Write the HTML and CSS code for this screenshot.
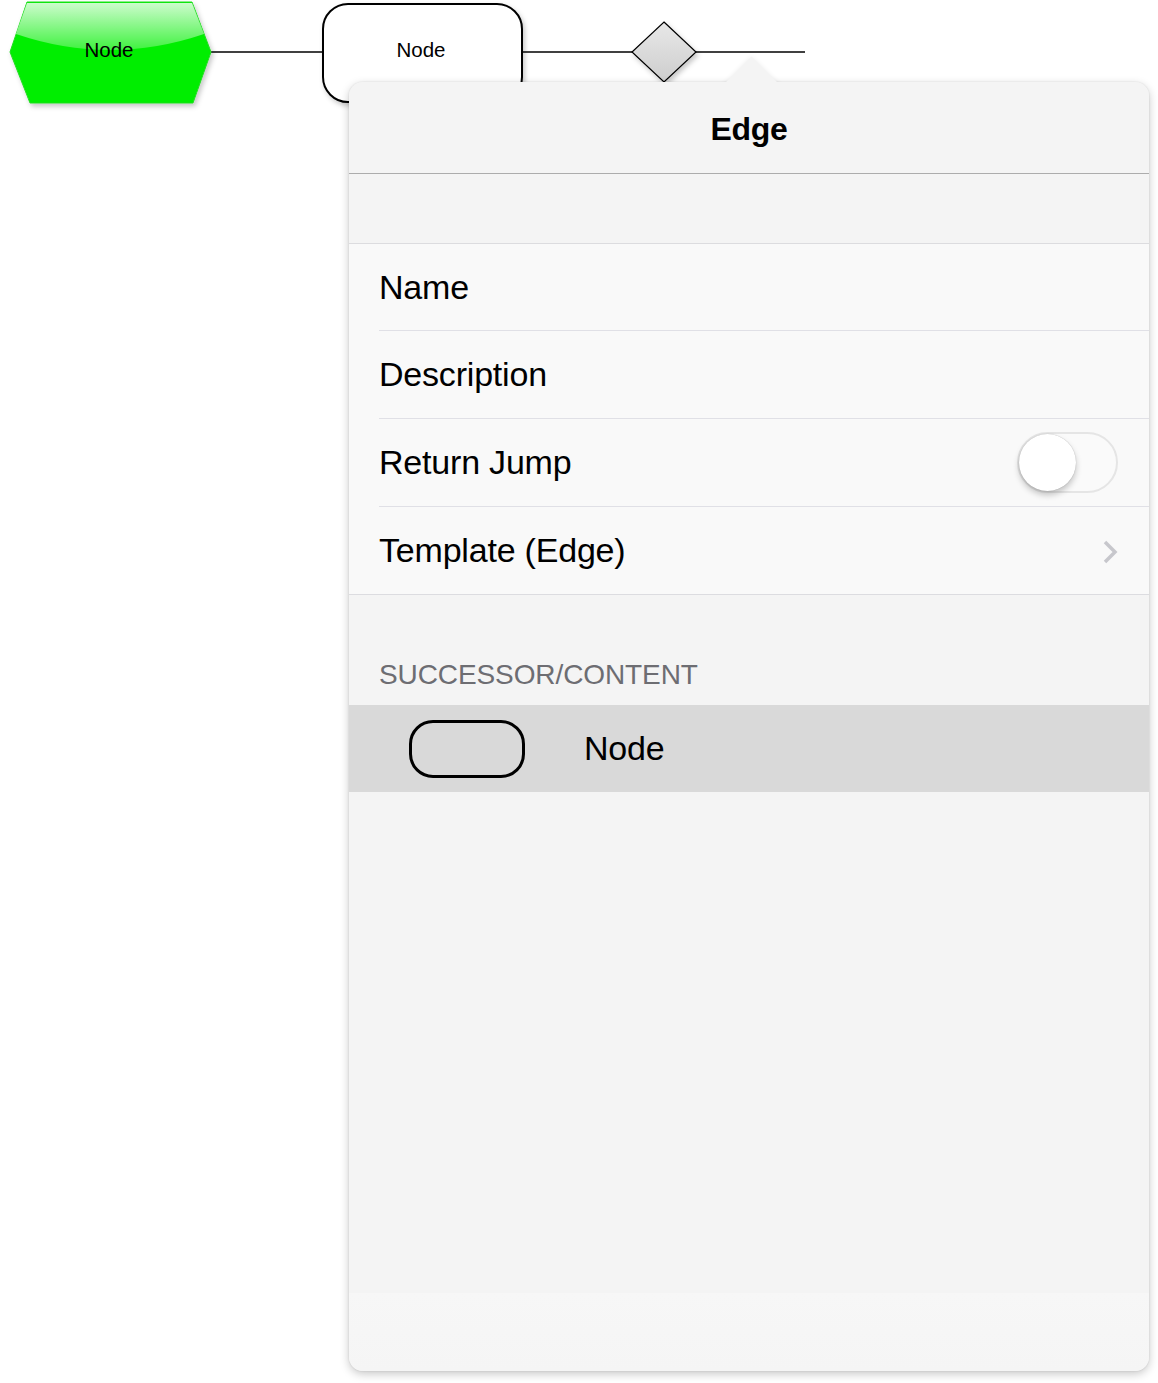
FILE: index.html
```html
<!DOCTYPE html>
<html lang="en">
<head>
    <meta charset="UTF-8">
    <title>Edge</title>
    <link rel="stylesheet" href="styles.css">
</head>
<body>
    <div id="canvas">
        <svg class="diagram" width="820" height="120" viewBox="0 0 820 120">
            <defs>
                <filter id="drop" x="-20%" y="-20%" width="140%" height="150%">
                    <feDropShadow dx="2" dy="3" stdDeviation="2.5" flood-color="#000" flood-opacity="0.22"/>
                </filter>
                <linearGradient id="gloss" x1="0" y1="0" x2="0" y2="1">
                    <stop offset="0" stop-color="#ffffff" stop-opacity="0.8"/>
                    <stop offset="1" stop-color="#ffffff" stop-opacity="0.25"/>
                </linearGradient>
                <linearGradient id="grey" x1="0" y1="0" x2="0" y2="1">
                    <stop offset="0" stop-color="#e8e8e8"/>
                    <stop offset="1" stop-color="#cdcdcd"/>
                </linearGradient>
            </defs>
            <line x1="211" y1="52" x2="323" y2="52" stroke="#000" stroke-width="1.5"/>
            <line x1="522" y1="52" x2="805" y2="52" stroke="#000" stroke-width="1.5"/>

            <g filter="url(#drop)">
                <polygon points="27,2 192,2 211,52 193,103 30,103 10,52" fill="#00ee00" stroke="#22dd22" stroke-width="1"/>
            </g>
            <path d="M 16,34 Q 110,66 204,34 L 192,3 L 27,3 Z" fill="url(#gloss)"/>
            <text x="109" y="57" class="node-label">Node</text>

            <rect x="323" y="4" width="199" height="98" rx="25" fill="#fff" stroke="#000" stroke-width="2" filter="url(#drop)"/>
            <text x="421" y="57" class="node-label">Node</text>

            <polygon points="664,22 696,52 664,82 632,52" fill="url(#grey)" stroke="#000" stroke-width="1.2" filter="url(#drop)"/>
        </svg>
    </div>

    <div class="popover">
        <div class="popover-arrow"></div>
        <div class="popover-header">Edge</div>
        <div class="spacer"></div>

        <div class="group">
            <div class="cell"><div class="cell-inner">Name</div></div>
            <div class="cell"><div class="cell-inner">Description</div></div>
            <div class="cell">
                <div class="cell-inner">
                    <span>Return Jump</span>
                    <span class="switch"><span class="knob"></span></span>
                </div>
            </div>
            <div class="cell">
                <div class="cell-inner last">
                    <span>Template (Edge)</span>
                    <svg class="chevron" width="16" height="24" viewBox="0 0 16 24">
                        <polyline points="3,2 13,12 3,22" fill="none" stroke="#c7c7cc" stroke-width="3.5"/>
                    </svg>
                </div>
            </div>
        </div>

        <div class="section-header">SUCCESSOR/CONTENT</div>
        <div class="cell selected">
            <span class="node-icon"></span>
            <span class="node-name">Node</span>
        </div>
        <div class="popover-fill"></div>
    </div>
</body>
</html>
```
FILE: styles.css
```css
body {
    margin: 0;
    background: #fff;
    font-family: "Liberation Sans", Arial, sans-serif;
    width: 1158px;
    height: 1383px;
    position: relative;
    overflow: hidden;
}
#canvas {
    position: absolute;
    left: 0;
    top: 0;
}
.diagram {
    display: block;
}
.node-label {
    font-family: "Liberation Sans", Arial, sans-serif;
    font-size: 20.5px;
    text-anchor: middle;
    fill: #000;
}
.popover {
    position: absolute;
    left: 349px;
    top: 82px;
    width: 800px;
    height: 1289px;
    background: #f4f4f4;
    border-radius: 14px;
    box-shadow: 0 3px 10px rgba(0, 0, 0, 0.22), 0 0 2px rgba(0, 0, 0, 0.12);
    display: flex;
    flex-direction: column;
}
.popover-arrow {
    position: absolute;
    left: 382px;
    top: -17px;
    width: 41px;
    height: 41px;
    background: #f4f4f4;
    transform: rotate(45deg);
    box-shadow: 0 0 5px rgba(0, 0, 0, 0.07);
}
.popover-header {
    position: relative;
    z-index: 1;
    height: 92px;
    box-sizing: border-box;
    border-bottom: 1px solid #acacac;
    border-radius: 14px 14px 0 0;
    background: #f4f4f4;
    display: flex;
    align-items: center;
    justify-content: center;
    font-size: 32px;
    font-weight: bold;
    letter-spacing: -0.3px;
    color: #000;
    padding-top: 3px;
}
.spacer {
    height: 70px;
    box-sizing: border-box;
    border-bottom: 1px solid #dcdcdf;
}
.group {
    background: #f9f9f9;
    border-bottom: 1px solid #dcdce0;
}
.cell {
    padding-left: 30px;
    font-size: 34px;
    letter-spacing: -0.2px;
    color: #000;
}
.cell-inner {
    height: 88px;
    box-sizing: border-box;
    border-bottom: 1px solid #e0e0e6;
    padding-right: 31px;
    display: flex;
    align-items: center;
    justify-content: space-between;
}
.cell:first-child .cell-inner {
    height: 87px;
}
.cell-inner.last {
    border-bottom: none;
    height: 87px;
}
.switch {
    position: relative;
    width: 101px;
    height: 61px;
    box-sizing: border-box;
    border: 2px solid #e5e5e5;
    border-radius: 31px;
    background: #fafafa;
}
.knob {
    position: absolute;
    left: 0;
    top: 0;
    width: 57px;
    height: 57px;
    border-radius: 50%;
    background: #fff;
    box-shadow: 0 4px 6px rgba(0, 0, 0, 0.22), 0 0 1px rgba(0, 0, 0, 0.3);
}
.chevron {
    display: block;
    margin-top: 2px;
}
.section-header {
    height: 110px;
    box-sizing: border-box;
    padding: 0 0 14px 30px;
    display: flex;
    align-items: flex-end;
    font-size: 28px;
    letter-spacing: -0.1px;
    color: #6d6d72;
}
.cell.selected {
    height: 87px;
    background: #d9d9d9;
    display: flex;
    align-items: center;
    padding-left: 60px;
}
.node-icon {
    width: 116px;
    height: 58px;
    box-sizing: border-box;
    border: 3px solid #000;
    border-radius: 24px;
    margin-right: 59px;
}
.popover-fill {
    flex: 1;
    border-radius: 0 0 14px 14px;
    background: linear-gradient(#f4f4f4 0, #f4f4f4 86.5%, #f7f7f7 86.5%, #f5f5f5 100%);
}
```
